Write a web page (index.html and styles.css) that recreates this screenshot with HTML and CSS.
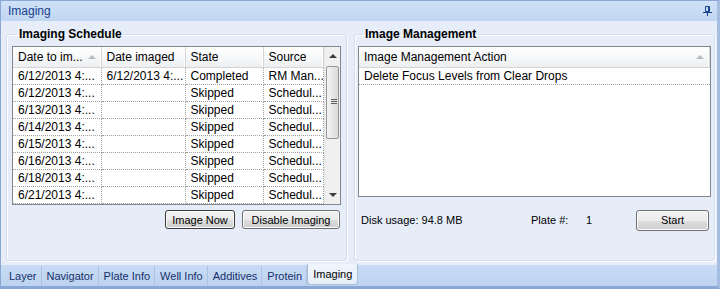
FILE: index.html
```html
<!DOCTYPE html>
<html>
<head>
    <title>Imaging</title>
    <meta charset="utf-8">
    <link rel="stylesheet" href="styles.css">
</head>
<body>
    <div class="window">
        <div class="titlebar">
            <span>Imaging</span>
            <svg class="pin" width="9" height="10" viewBox="0 0 9 10">
                <path d="M2.5 0.5h4v5h-4z M5.5 0.5v5 M0 6.5h9 M4.5 6.5v3.5" fill="none" stroke="#15428b" stroke-width="1"/>
            </svg>
        </div>

        <div class="content">
            <fieldset class="group schedule">
                <legend>Imaging Schedule</legend>
                <div class="grid">
                    <table>
                        <colgroup>
                            <col style="width: 88px">
                            <col style="width: 84px">
                            <col style="width: 78px">
                            <col style="width: 60px">
                        </colgroup>
                        <thead>
                            <tr>
                                <th class="sorted">Date to im...<span class="sort"></span></th>
                                <th>Date imaged</th>
                                <th>State</th>
                                <th>Source</th>
                            </tr>
                        </thead>
                        <tbody>
                            <tr><td>6/12/2013 4:...</td><td>6/12/2013 4:...</td><td>Completed</td><td>RM Man...</td></tr>
                            <tr><td>6/12/2013 4:...</td><td></td><td>Skipped</td><td>Schedul...</td></tr>
                            <tr><td>6/13/2013 4:...</td><td></td><td>Skipped</td><td>Schedul...</td></tr>
                            <tr><td>6/14/2013 4:...</td><td></td><td>Skipped</td><td>Schedul...</td></tr>
                            <tr><td>6/15/2013 4:...</td><td></td><td>Skipped</td><td>Schedul...</td></tr>
                            <tr><td>6/16/2013 4:...</td><td></td><td>Skipped</td><td>Schedul...</td></tr>
                            <tr><td>6/18/2013 4:...</td><td></td><td>Skipped</td><td>Schedul...</td></tr>
                            <tr><td>6/21/2013 4:...</td><td></td><td>Skipped</td><td>Schedul...</td></tr>
                        </tbody>
                    </table>
                    <div class="vscroll">
                        <div class="arrow up"></div>
                        <div class="track">
                            <div class="thumb"><span class="grip"></span></div>
                        </div>
                        <div class="arrow down"></div>
                    </div>
                </div>
                <div class="actions">
                    <button class="btn default">Image Now</button>
                    <button class="btn wide">Disable Imaging</button>
                </div>
            </fieldset>

            <fieldset class="group management">
                <legend>Image Management</legend>
                <div class="grid mgmt">
                    <table>
                        <thead>
                            <tr><th class="sorted">Image Management Action<span class="sort"></span></th></tr>
                        </thead>
                        <tbody>
                            <tr><td>Delete Focus Levels from Clear Drops</td></tr>
                        </tbody>
                    </table>
                </div>
                <div class="status">
                    <span class="disk">Disk usage: 94.8 MB</span>
                    <span class="plate-label">Plate #:</span>
                    <span class="plate-num">1</span>
                    <button class="btn start">Start</button>
                </div>
            </fieldset>
        </div>

        <div class="tabs">
            <div class="tab">Layer</div>
            <div class="tab">Navigator</div>
            <div class="tab">Plate Info</div>
            <div class="tab">Well Info</div>
            <div class="tab">Additives</div>
            <div class="tab">Protein</div>
            <div class="tab active">Imaging</div>
        </div>
    </div>
</body>
</html>
```

FILE: styles.css
```css
body {
    margin: 0;
    font-family: "Liberation Sans", Arial, sans-serif;
    font-size: 11px;
    color: #000;
}
.window {
    width: 720px;
    height: 289px;
    box-sizing: border-box;
    border: 1px solid #8ba7d3;
    border-right: 3px solid #a6bde2;
    border-bottom: 3px solid #8aa8d6;
    background: #e6edf9;
    display: flex;
    flex-direction: column;
}
.titlebar {
    height: 20px;
    flex: none;
    background: linear-gradient(#d0e1f7, #c1d6f2);
    color: #15428b;
    font-size: 12px;
    display: flex;
    align-items: center;
    justify-content: space-between;
    padding: 0 5px 0 7px;
}
.pin {
    display: block;
    margin-top: -1px;
}
.content {
    height: 244px;
    flex: none;
    display: flex;
    gap: 7px;
    padding: 6px 2px 0 5px;
    box-sizing: border-box;
}
.group {
    margin: 0;
    height: 234px;
    box-sizing: border-box;
    border: 1px solid #d3dded;
    border-radius: 3px;
    box-shadow: inset 1px 1px 0 #fff, 1px 1px 0 #fff;
    padding: 0 5px 0 5px;
    min-width: 0;
}
.group legend {
    font-size: 12px;
    font-weight: bold;
    line-height: 14px;
    padding: 0 2px;
    margin-left: 5px;
}
.schedule {
    width: 341px;
    flex: none;
}
.management {
    flex: 1;
    padding: 0 3px 0 3px;
}
.grid {
    margin-top: 5px;
    border: 1px solid #828790;
    background: #fff;
    display: flex;
    height: 159px;
    box-sizing: border-box;
}
.grid table {
    border-collapse: collapse;
    table-layout: fixed;
    width: 310px;
    align-self: flex-start;
    font-size: 12px;
}
.mgmt {
    height: 151px;
}
.mgmt table {
    width: 100%;
}
th {
    height: 20px;
    padding: 0 0 0 5px;
    text-align: left;
    font-weight: normal;
    background: linear-gradient(#ffffff, #f7f8f9 50%, #eceef1);
    border-right: 1px solid #d5d5d5;
    border-bottom: 1px solid #d5d5d5;
    box-shadow: inset -1px 0 0 #fff;
    position: relative;
    white-space: nowrap;
}
.sort {
    position: absolute;
    right: 5px;
    top: 8px;
    width: 0;
    height: 0;
    border-left: 4px solid transparent;
    border-right: 4px solid transparent;
    border-bottom: 4px solid #b9bcc1;
}
td {
    height: 16px;
    padding: 0 0 0 5px;
    border-right: 1px dotted #a0a0a0;
    border-bottom: 1px dotted #a0a0a0;
    white-space: nowrap;
    overflow: hidden;
}
.mgmt td {
    border-right: none;
}
.vscroll {
    width: 17px;
    margin-left: auto;
    background: #f0f0f0;
    border-left: 1px solid #e6e6e6;
    display: flex;
    flex-direction: column;
}
.arrow {
    height: 17px;
    flex: none;
    position: relative;
}
.arrow::after {
    content: "";
    position: absolute;
    left: 4px;
    top: 7px;
    border-left: 4px solid transparent;
    border-right: 4px solid transparent;
}
.arrow.up::after {
    border-bottom: 4px solid #3c3c3c;
}
.arrow.down::after {
    border-top: 4px solid #3c3c3c;
    top: 6px;
}
.track {
    flex: 1;
}
.thumb {
    margin: 2px 1px 0 1px;
    height: 73px;
    box-sizing: border-box;
    border: 1px solid #979797;
    border-radius: 2px;
    background: linear-gradient(90deg, #f4f4f4, #e8e8e8 50%, #d8d8d8);
    position: relative;
}
.grip {
    position: absolute;
    left: 4px;
    top: 32px;
    width: 6px;
    height: 5px;
    background: repeating-linear-gradient(#5f5f5f 0 1px, transparent 1px 2px);
}
.actions {
    display: flex;
    justify-content: flex-end;
    gap: 7px;
    margin-top: 5px;
    padding-right: 1px;
}
.btn {
    font-family: "Liberation Sans", Arial, sans-serif;
    font-size: 11px;
    color: #000;
    height: 19px;
    padding: 0;
    border: 1px solid #707070;
    border-radius: 3px;
    background: linear-gradient(#f2f2f2, #ebebeb 50%, #dddddd 51%, #cfcfcf);
    box-shadow: inset 0 0 0 1px #fcfcfc;
}
.btn.default {
    width: 70px;
    border-color: #3c3c3c;
}
.btn.wide {
    width: 98px;
}
.status {
    display: flex;
    align-items: center;
    margin-top: 13px;
    height: 20px;
}
.disk {
    margin-left: 3px;
    width: 170px;
}
.plate-label {
    width: 55px;
}
.plate-num {
    flex: 1;
}
.btn.start {
    width: 73px;
    height: 21px;
    margin-right: 2px;
}
.tabs {
    height: 21px;
    flex: none;
    background: linear-gradient(#c7dbf4, #bed3ef);
    display: flex;
    padding-left: 3px;
    color: #15306b;
}
.tab {
    padding: 0 4px 0 5px;
    line-height: 20px;
    border-right: 1px solid #aec3e2;
    margin-top: 1px;
    font-size: 11px;
}
.tab.active {
    background: linear-gradient(#f0f5fc, #e6eef9);
    border: 1px solid #a9bcd9;
    border-top: none;
    border-radius: 0 0 4px 4px;
    margin-top: -1px;
    height: 20px;
    padding: 0 5px;
    color: #000;
}
```
